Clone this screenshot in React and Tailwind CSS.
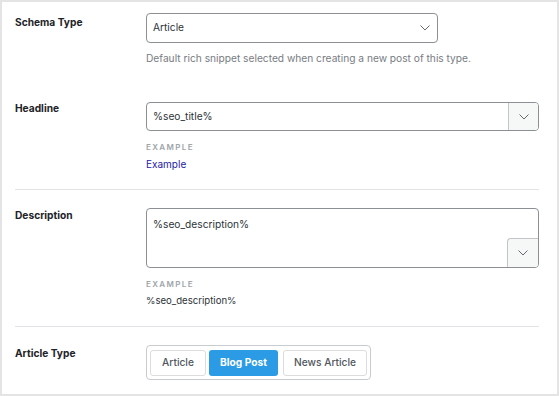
import React from "react";

const font = { fontFamily: "Inter, 'Noto Sans', sans-serif" };

function Chevron() {
  return (
    <svg width="10" height="6" viewBox="0 0 10 6" fill="none">
      <path d="M0.8 0.8 L5 5 L9.2 0.8" stroke="#646970" strokeWidth="1" strokeLinecap="round" strokeLinejoin="round" />
    </svg>
  );
}

function Label({ children, className = "" }) {
  return (
    <div className={"w-[131px] shrink-0 text-[10.2px] leading-[14px] font-bold text-[#1d2327] " + className}>
      {children}
    </div>
  );
}

function ExampleBlock({ value, link }) {
  return (
    <>
      <div className="mt-[10px] text-[8px] leading-[12px] font-semibold tracking-[0.17em] text-[#a0a5aa]">EXAMPLE</div>
      <div className={"mt-[4px] leading-[14px] " + (link ? "text-[10px] text-[#2420a6]" : "text-[9.6px] text-[#2c3338]")}>{value}</div>
    </>
  );
}

export default function App() {
  return (
    <div style={font} className="w-[559px] h-[396px] border-2 border-[#e4e4e4] bg-white pl-[13px] pr-[18px] pt-[11px] box-border overflow-hidden">
      {/* Schema Type */}
      <div className="flex">
        <Label className="mt-[2px]">Schema Type</Label>
        <div className="flex flex-col">
          <div className="w-[292px] h-[30px] border border-[#8c8f94] rounded-[4px] flex items-center justify-between pl-[6px] pr-[7px] text-[10.2px] text-[#2c3338]">
            <span>Article</span>
            <Chevron />
          </div>
          <div className="mt-[8px] text-[10.2px] leading-[14px] text-[#787c82]">
            Default rich snippet selected when creating a new post of this type.
          </div>
        </div>
      </div>

      {/* Headline */}
      <div className="flex mt-[37px]">
        <Label className="mt-[-1px]">Headline</Label>
        <div className="flex flex-col flex-1">
          <div className="h-[29px] border border-[#8c8f94] rounded-[4px] flex items-stretch text-[10.2px] text-[#2c3338] overflow-hidden">
            <div className="flex-1 flex items-center pl-[6px]">%seo_title%</div>
            <div className="w-[30px] border-l border-[#c3c4c7] bg-[#f6f7f7] flex items-center justify-center">
              <Chevron />
            </div>
          </div>
          <ExampleBlock value="Example" link />
        </div>
      </div>

      <div className="mt-[18px] h-px bg-[#e2e4e7]" />

      {/* Description */}
      <div className="flex mt-[18px]">
        <Label className="mt-[0px]">Description</Label>
        <div className="flex flex-col flex-1">
          <div className="h-[60px] border border-[#8c8f94] rounded-[4px] flex flex-col text-[10.2px] text-[#2c3338] overflow-hidden">
            <div className="pl-[6px] pt-[8px] leading-[14px] flex-1">%seo_description%</div>
            <div className="flex justify-end">
              <div className="w-[31px] h-[29px] border-l border-t border-[#c3c4c7] rounded-tl-[4px] bg-[#f6f7f7] flex items-center justify-center">
                <Chevron />
              </div>
            </div>
          </div>
          <ExampleBlock value="%seo_description%" />
        </div>
      </div>

      <div className="mt-[18px] h-px bg-[#e2e4e7]" />

      {/* Article Type */}
      <div className="flex mt-[18px]">
        <Label className="mt-[1px]">Article Type</Label>
        <div className="flex items-center gap-[3px] border border-[#c8cbd0] rounded-[4px] px-[3px] h-[35px] bg-white">
          <div className="w-[56px] h-[26px] border border-[#dcdcde] rounded-[3px] flex items-center justify-center text-[10.2px] font-medium text-[#50575e]">
            Article
          </div>
          <div className="w-[69px] h-[26px] rounded-[3px] bg-[#2a9be4] flex items-center justify-center text-[10.2px] font-bold text-white">
            Blog Post
          </div>
          <div className="ml-[2px] w-[84px] h-[26px] border border-[#dcdcde] rounded-[3px] flex items-center justify-center text-[10.2px] font-medium text-[#50575e]">
            News Article
          </div>
        </div>
      </div>
    </div>
  );
}
